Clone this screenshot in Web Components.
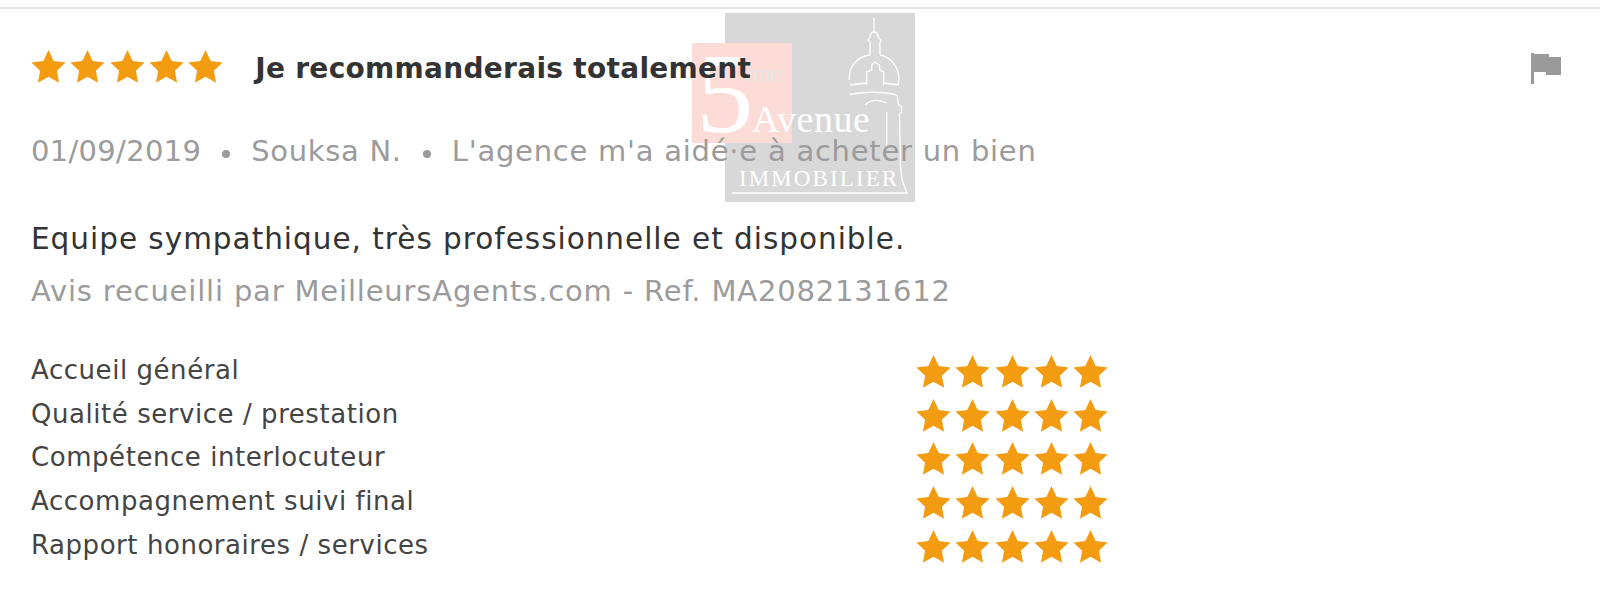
<!DOCTYPE html>
<html lang="fr">
<head>
<meta charset="utf-8">
<title>Avis</title>
<style>
html,body{margin:0;background:#fff;height:603px;overflow:hidden;}
body{font-family:"DejaVu Sans",Inter,sans-serif;}
</style>
</head>
<body>
<review-card>
  <star-row slot="stars"></star-row>
  <span slot="title">Je recommanderais totalement</span>
  <span slot="date">01/09/2019</span>
  <span slot="author">Souksa N.</span>
  <span slot="kind">L'agence m'a aidé·e à acheter un bien</span>
  <span slot="comment">Equipe sympathique, très professionnelle et disponible.</span>
  <span slot="source">Avis recueilli par MeilleursAgents.com - Ref. MA2082131612</span>
  <rating-row slot="ratings" label="Accueil général"></rating-row>
  <rating-row slot="ratings" label="Qualité service / prestation"></rating-row>
  <rating-row slot="ratings" label="Compétence interlocuteur"></rating-row>
  <rating-row slot="ratings" label="Accompagnement suivi final"></rating-row>
  <rating-row slot="ratings" label="Rapport honoraires / services"></rating-row>
</review-card>
<script>
const starsTemplate = document.createElement('template');
starsTemplate.innerHTML = `
  <style>
    :host{display:flex;gap:4.3px;height:34px;}
    svg{width:35px;height:34px;display:block;fill:#f39c12;}
  </style>
  ${'<svg viewBox="0 0 35 34"><path d="M17.5 0 L22.7 10.9 L34.6 12.4 L25.9 20.7 L28.1 32.8 L17.5 26.8 L6.9 32.8 L9.1 20.7 L0.4 12.4 L12.3 10.9 Z"/></svg>'.repeat(5)}
`;
class StarRow extends HTMLElement {
  constructor() {
    super();
    this.attachShadow({ mode: 'open' });
    this.shadowRoot.appendChild(starsTemplate.content.cloneNode(true));
  }
}
customElements.define('star-row', StarRow);

const rowTemplate = document.createElement('template');
rowTemplate.innerHTML = `
  <style>
    :host{display:grid;grid-template-columns:885px auto;align-items:center;height:43.75px;}
    .label{font-size:26px;letter-spacing:.55px;color:#444;white-space:nowrap;padding-bottom:4px;}
  </style>
  <div class="label"></div>
  <star-row></star-row>
`;
class RatingRow extends HTMLElement {
  constructor() {
    super();
    this.attachShadow({ mode: 'open' });
    this.shadowRoot.appendChild(rowTemplate.content.cloneNode(true));
    this.shadowRoot.querySelector('.label').innerText = this.getAttribute('label');
  }
}
customElements.define('rating-row', RatingRow);

const logoTemplate = document.createElement('template');
logoTemplate.innerHTML = `
  <style>
    :host{position:absolute;left:692px;top:4px;width:223px;height:190px;display:block;font-family:"Liberation Serif",serif;color:#fff;}
    .grey{position:absolute;left:33px;top:0;width:190px;height:189px;background:#d8d8d8;}
    .pink{position:absolute;left:0;top:30px;width:100px;height:100px;background:#fddcd7;}
    svg{position:absolute;left:33px;top:0;width:190px;height:190px;fill:none;stroke:#fff;stroke-width:1.3;}
    span{position:absolute;white-space:nowrap;line-height:1;}
    .five{left:4px;top:23px;font-size:115px;}
    .eme{left:51px;top:49px;font-size:23px;color:#e6e6e6;}
    .avenue{left:60px;top:87px;font-size:38px;letter-spacing:.5px;}
    .immo{left:47px;top:154px;font-size:23px;letter-spacing:2.1px;}
  </style>
  <div class="grey"></div>
  <div class="pink"></div>
  <svg viewBox="0 0 190 190">
    <path d="M149 5V19M149 19c-3 0-4 2-4 5l-2 3 2 2V42M149 19c3 0 4 2 4 5l3 3-1 2V42"/>
    <path d="M124.3 67c-1-14 9-24 21-25M155 42c11 2 19 12 19 25l-1 4"/>
    <path d="M141.7 72V59l5-2v-5l3-3 5 3v5l4 2v13M125 72l16-2M159 70l15 2"/>
    <path d="M124.3 81.5Q148 77 170 81.5l2 1 1.5 9 3 2v6l-2 2 1 52 1.5 13 5 13.5H7"/>
    <path d="M140 92Q148 84 161.700 90M161.700 98.700V134"/>
  </svg>
  <span class="five">5</span>
  <span class="eme">ème</span>
  <span class="avenue">Avenue</span>
  <span class="immo">IMMOBILIER</span>
`;
class LogoWatermark extends HTMLElement {
  constructor() {
    super();
    this.attachShadow({ mode: 'open' });
    this.shadowRoot.appendChild(logoTemplate.content.cloneNode(true));
  }
}
customElements.define('logo-watermark', LogoWatermark);

const cardTemplate = document.createElement('template');
cardTemplate.innerHTML = `
  <style>
    :host{display:block;position:relative;box-sizing:border-box;height:596px;margin-top:7px;border-top:2px solid #e6e6e6;padding:41px 31px 0;}
    .head,.meta,.comment,.source,.ratings{position:relative;z-index:1;}
    .head{display:flex;align-items:center;gap:32px;height:34px;}
    .title{font-size:28px;font-weight:700;letter-spacing:.3px;color:#333;flex:1;white-space:nowrap;padding-top:2px;}
    .flag{width:31px;height:31px;display:block;fill:#9a9a9a;margin:2px 7px 0 0;}
    .meta{display:flex;align-items:center;gap:21px;margin-top:50px;height:34px;font-size:29px;color:#9b9b9b;white-space:nowrap;}
    ::slotted([slot=date]){letter-spacing:.3px;}
    ::slotted([slot=author]){letter-spacing:.7px;}
    ::slotted([slot=kind]){letter-spacing:.75px;}
    .dot{width:8px;height:8px;border-radius:50%;background:#9b9b9b;margin-top:6px;}
    .comment{margin-top:54px;font-size:29.5px;letter-spacing:.98px;color:#333;line-height:34px;white-space:nowrap;}
    .source{margin-top:18px;font-size:29px;letter-spacing:.83px;color:#9b9b9b;line-height:34px;white-space:nowrap;}
    .ratings{margin-top:42px;display:flex;flex-direction:column;}
  </style>
  <logo-watermark></logo-watermark>
  <div class="head">
    <slot name="stars"></slot>
    <div class="title"><slot name="title"></slot></div>
    <svg class="flag" viewBox="0 0 31 31"><path d="M0 0h3v31H0zM3 1h15v3h12v18H15v-3H3z"/></svg>
  </div>
  <div class="meta">
    <slot name="date"></slot><i class="dot"></i>
    <slot name="author"></slot><i class="dot"></i>
    <slot name="kind"></slot>
  </div>
  <div class="comment"><slot name="comment"></slot></div>
  <div class="source"><slot name="source"></slot></div>
  <div class="ratings"><slot name="ratings"></slot></div>
`;
class ReviewCard extends HTMLElement {
  constructor() {
    super();
    this.attachShadow({ mode: 'open' });
    this.shadowRoot.appendChild(cardTemplate.content.cloneNode(true));
  }
}
customElements.define('review-card', ReviewCard);
</script>
</body>
</html>
